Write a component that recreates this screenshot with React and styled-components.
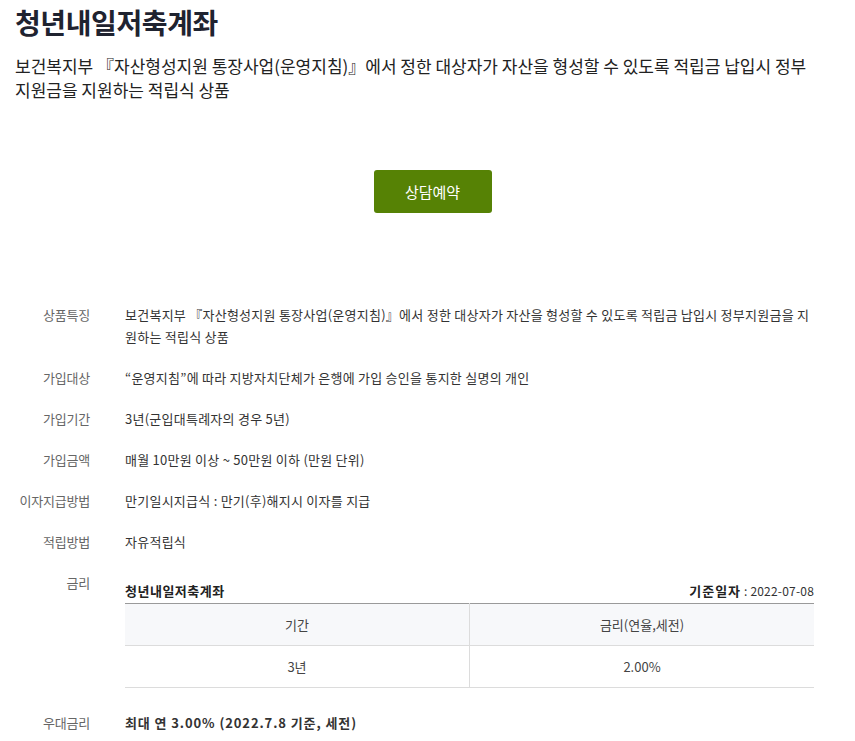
import React from 'react';
import styled, { createGlobalStyle } from 'styled-components';

const GlobalStyle = createGlobalStyle`
  html, body {
    margin: 0;
    padding: 0;
    background: #fff;
  }
  body {
    font-family: "Noto Sans CJK KR", "Noto Sans", sans-serif;
    color: #333;
  }
`;

const Page = styled.div`
  width: 855px;
  box-sizing: border-box;
  padding: 0 41px 0 15px;
`;

const Title = styled.h1`
  margin: 0;
  padding-top: 2px;
  font-size: 28px;
  line-height: 40px;
  font-weight: 700;
  color: #1f2330;
  letter-spacing: -0.4px;
`;

const Summary = styled.p`
  margin: 12px 0 0;
  font-size: 17px;
  line-height: 24px;
  color: #222;
  letter-spacing: 0;
`;

const ButtonRow = styled.div`
  display: flex;
  justify-content: center;
  padding: 68px 0 0 36px;
`;

const ReserveButton = styled.button`
  width: 118px;
  height: 43px;
  border: 0;
  border-radius: 3px;
  background: #568205;
  color: #fff;
  font-family: inherit;
  font-size: 15px;
  cursor: pointer;
`;

const InfoList = styled.dl`
  margin: 91px 0 0;
  display: grid;
  grid-template-columns: 75px 1fr;
  column-gap: 35px;
  row-gap: 19px;
  font-size: 13px;
  line-height: 22px;
`;

const Label = styled.dt`
  margin: 0;
  text-align: right;
  color: #666;
  letter-spacing: -0.2px;
`;

const Value = styled.dd`
  margin: 0;
  color: #333;
  letter-spacing: ${({ $bold }) => ($bold ? '0.9px' : '0.25px')};
  font-weight: ${({ $bold }) => ($bold ? 700 : 400)};
  word-break: break-all;
`;

const RateBox = styled.div`
  margin-top: 8px;
  margin-bottom: 5px;
  letter-spacing: 0;
`;

const RateHead = styled.div`
  display: flex;
  justify-content: space-between;
  align-items: center;
  padding-bottom: 1px;
`;

const RateName = styled.strong`
  font-weight: 700;
  color: #222;
  letter-spacing: 0.5px;
`;

const BaseDate = styled.span`
  font-size: 12px;
  color: #333;
  letter-spacing: 0.2px;
  b {
    font-size: 13px;
    color: #222;
    letter-spacing: 1px;
  }
`;

const RateTable = styled.table`
  width: 100%;
  table-layout: fixed;
  border-collapse: collapse;
  border-top: 1px solid #9a9a9a;
`;

const HeadCell = styled.th`
  height: 41px;
  padding: 0;
  background: #f7f8fa;
  font-weight: 400;
  color: #444;
  border-bottom: 1px solid #dcdcdc;
  & + & {
    border-left: 1px solid #dcdcdc;
  }
`;

const Cell = styled.td`
  height: 41px;
  padding: 0;
  text-align: center;
  color: #444;
  border-bottom: 1px solid #dcdcdc;
  & + & {
    border-left: 1px solid #dcdcdc;
  }
`;

const rows = [
  ['상품특징', '보건복지부 『자산형성지원 통장사업(운영지침)』에서 정한 대상자가 자산을 형성할 수 있도록 적립금 납입시 정부지원금을 지원하는 적립식 상품'],
  ['가입대상', '“운영지침”에 따라 지방자치단체가 은행에 가입 승인을 통지한 실명의 개인'],
  ['가입기간', '3년(군입대특례자의 경우 5년)'],
  ['가입금액', '매월 10만원 이상 ~ 50만원 이하 (만원 단위)'],
  ['이자지급방법', '만기일시지급식 : 만기(후)해지시 이자를 지급'],
  ['적립방법', '자유적립식'],
];

const App = () => {
  return (
    <Page>
      <GlobalStyle />
      <Title>청년내일저축계좌</Title>
      <Summary>
        보건복지부 『자산형성지원 통장사업(운영지침)』에서 정한 대상자가 자산을 형성할 수 있도록 적립금 납입시 정부지원금을 지원하는 적립식 상품
      </Summary>
      <ButtonRow>
        <ReserveButton type="button">상담예약</ReserveButton>
      </ButtonRow>
      <InfoList>
        {rows.map(([label, value]) => (
          <React.Fragment key={label}>
            <Label>{label}</Label>
            <Value>{value}</Value>
          </React.Fragment>
        ))}
        <Label>금리</Label>
        <Value>
          <RateBox>
            <RateHead>
              <RateName>청년내일저축계좌</RateName>
              <BaseDate><b>기준일자</b> : 2022-07-08</BaseDate>
            </RateHead>
            <RateTable>
              <thead>
                <tr>
                  <HeadCell>기간</HeadCell>
                  <HeadCell>금리(연율,세전)</HeadCell>
                </tr>
              </thead>
              <tbody>
                <tr>
                  <Cell>3년</Cell>
                  <Cell>2.00%</Cell>
                </tr>
              </tbody>
            </RateTable>
          </RateBox>
        </Value>
        <Label>우대금리</Label>
        <Value $bold>최대 연 3.00% (2022.7.8 기준, 세전)</Value>
      </InfoList>
    </Page>
  );
};

export default App;
